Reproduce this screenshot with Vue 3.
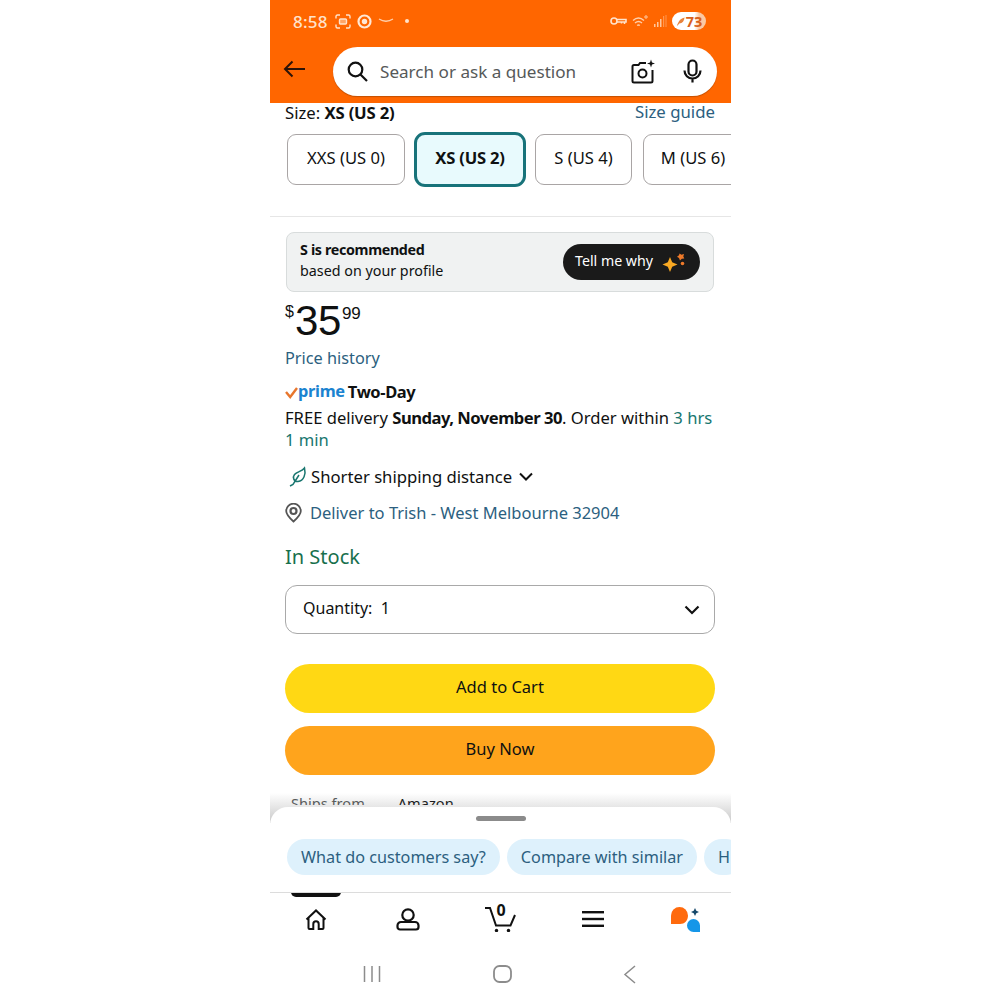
<script setup>
const sizes = [
  { label: 'XXS (US 0)', w: 118 },
  { label: 'XS (US 2)', w: 112, active: true },
  { label: 'S (US 4)', w: 97 },
  { label: 'M (US 6)', w: 100 },
]
const prompts = ['What do customers say?', 'Compare with similar', 'H']
</script>

<template>
  <div class="page">
    <div class="phone">
      <header class="top">
        <div class="status">
          <span class="time">8:58</span>
          <svg class="st" width="16" height="15" viewBox="0 0 16 15" fill="none" stroke="#ffe3cc" stroke-width="1.400">
            <path d="M1 4.500V2.500Q1 1 2.500 1H5M11 1h2.500Q15 1 15 2.500v2M1 10.500v2Q1 14 2.500 14H5M11 14h2.500q1.500 0 1.500-1.500v-2" />
            <rect x="4.500" y="5" width="7" height="5" rx="1" fill="#ffe3cc" fill-opacity=".5" />
          </svg>
          <svg class="st" width="15" height="15" viewBox="0 0 15 15" fill="none">
            <circle cx="7.500" cy="7.500" r="6" stroke="#ffe8d6" stroke-width="2.200" />
            <circle cx="7.500" cy="7.500" r="2.700" fill="#ffe8d6" />
          </svg>
          <svg class="st smile" width="16" height="7" viewBox="0 0 16 7" fill="none">
            <path d="M1 2q7 4.500 14 0" stroke="#ffd0ac" stroke-width="1.300" />
          </svg>
          <span class="dot"></span>
          <span class="spacer"></span>
          <svg width="17" height="10" viewBox="0 0 17 10" fill="none" stroke="#ffe3cc" stroke-width="1.600">
            <circle cx="4" cy="5" r="3" />
            <path d="M7 3.500h9v2.500h-1.500v2M11.500 6v1.500M7 6h7" />
          </svg>
          <svg class="wifi" width="16" height="13" viewBox="0 0 16 13" fill="none" stroke="#ffd0ac" stroke-width="1.400">
            <path d="M1 5.500q5.500-5 11 0M3 8q3.500-3 7 0M5.200 10.500q1.300-1.200 2.600 0" />
            <circle cx="14" cy="2" r="1.200" stroke-width="1" />
          </svg>
          <svg class="signal" width="13" height="12" viewBox="0 0 13 12" fill="#ffc79c">
            <rect x="0" y="9" width="1.500" height="3" />
            <rect x="3" y="7" width="1.500" height="5" />
            <rect x="6" y="4" width="1.500" height="8" />
            <rect x="9" y="1" width="1.200" height="11" opacity=".5" />
            <rect x="11.500" y="0" width="1" height="12" opacity=".5" />
          </svg>
          <span class="battery">
            <svg width="9" height="9" viewBox="0 0 11 10">
              <path d="M1 10l2-4c1-3 4-5 7.500-6C10 4 8 7 4 7.500L2 10z" fill="#e8833d" />
            </svg>
            73
          </span>
        </div>
        <div class="searchrow">
          <svg class="back" width="22" height="18" viewBox="0 0 22 18" fill="none" stroke="#2d1408" stroke-width="2">
            <path d="M22 9H2M9.500 1.500L2 9l7.500 7.500" />
          </svg>
          <div class="search">
            <svg width="21" height="21" viewBox="0 0 21 21" fill="none" stroke="#111" stroke-width="2.200">
              <circle cx="8.500" cy="8.500" r="6.800" />
              <path d="M13.500 13.500l6.500 6.500" />
            </svg>
            <span class="placeholder">Search or ask a question</span>
            <svg class="cam" width="25" height="25" viewBox="0 0 25 25" fill="none" stroke="#111" stroke-width="2">
              <path d="M15 4H9L7.500 6H3a1.500 1.500 0 0 0-1.500 1.500V22A1.500 1.500 0 0 0 3 23.500h17a1.500 1.500 0 0 0 1.500-1.500V11" />
              <circle cx="11.500" cy="14.500" r="4" />
              <path d="M20 0.500l1 3 3 1-3 1-1 3-1-3-3-1 3-1z" fill="#111" stroke="none" />
            </svg>
            <svg class="mic" width="19" height="25" viewBox="0 0 19 25" fill="none" stroke="#111" stroke-width="2">
              <rect x="5.500" y="1.500" width="8" height="15" rx="4" stroke-width="2.200" />
              <path d="M1.500 11.500a8 8 0 0 0 16 0M9.500 19.500v4" stroke-width="2.200" />
            </svg>
          </div>
        </div>
      </header>

      <main class="content">
        <div class="sizehead">
          <span>Size: <b>XS (US 2)</b></span>
          <a class="link">Size guide</a>
        </div>
        <div class="chips">
          <div
            v-for="s in sizes"
            :key="s.label"
            class="chip"
            :class="{ active: s.active }"
            :style="{ flexBasis: s.w + 'px' }"
          >{{ s.label }}</div>
        </div>
        <div class="rule"></div>

        <div class="body">
          <section class="rec">
            <div class="rectext">
              <strong>S is recommended</strong>
              <span>based on your profile</span>
            </div>
            <div class="tell">
              <span>Tell me why</span>
              <svg width="24" height="20" viewBox="0 0 24 20">
                <path d="M8 5l2.200 5.300L15.500 12.500l-5.300 2.200L8 20l-2.200-5.300L.5 12.500l5.300-2.200z" fill="#f8a823" />
                <path d="M17.500 1.500l2 1.200 2.500-.7-.7 2.500 1 2-2.500.2-1.800 1.800-1-2.500-2-1.200 2-1.500z" fill="#ee7a2a" />
                <circle cx="20.500" cy="11.500" r="1.800" fill="#ee7a2a" />
              </svg>
            </div>
          </section>

          <div class="price"><sup>$</sup><span class="whole">35</span><sup class="cents">99</sup></div>
          <a class="link history">Price history</a>

          <div class="prime">
            <svg width="13" height="12" viewBox="0 0 13 12" fill="none" stroke="#e8762d" stroke-width="2.400">
              <path d="M1 5l4.200 5L12 1" />
            </svg>
            <span class="primeword">prime</span>
            <b>Two-Day</b>
          </div>
          <p class="delivery">FREE delivery <b>Sunday, November 30</b>. Order within <span class="teal">3 hrs 1 min</span></p>

          <div class="ship">
            <svg width="20" height="22" viewBox="0 0 20 22" fill="none" stroke="#19766f" stroke-width="1.500">
              <path d="M16.500 3c1.500 6-.5 13-6.500 13.500C5.500 17 4.500 12 6.500 9.500 9 6.500 14 6.500 16.500 3z" />
              <path d="M2 21l3-1.500L11 10" />
            </svg>
            <span>Shorter shipping distance</span>
            <svg width="14" height="9" viewBox="0 0 14 9" fill="none" stroke="#111" stroke-width="2">
              <path d="M1 1.500l6 6 6-6" />
            </svg>
          </div>

          <div class="deliver">
            <svg width="17" height="20" viewBox="0 0 17 20" fill="none" stroke="#555" stroke-width="1.800">
              <path d="M8.500 18.500C4 14.500 1.200 11.500 1.200 8a7.300 7.300 0 0 1 14.600 0c0 3.500-2.800 6.500-7.300 10.500z" />
              <circle cx="8.500" cy="8" r="3" stroke-width="2.200" />
            </svg>
            <a class="link">Deliver to Trish - West Melbourne 32904</a>
          </div>

          <div class="stock">In Stock</div>

          <div class="qty">
            <span>Quantity:&nbsp; 1</span>
            <svg width="16" height="10" viewBox="0 0 16 10" fill="none" stroke="#111" stroke-width="2.200">
              <path d="M1.500 1.500L8 8l6.500-6.500" />
            </svg>
          </div>

          <button class="cta cart">Add to Cart</button>
          <button class="cta buy">Buy Now</button>

          <div class="ships"><span>Ships from</span><span class="seller">Amazon</span></div>
        </div>
        <div class="shade"></div>
      </main>

      <section class="sheet">
        <div class="grip"></div>
        <div class="prompts">
          <span v-for="p in prompts" :key="p" class="prompt">{{ p }}</span>
        </div>
      </section>

      <nav class="tabs">
        <span class="indicator"></span>
        <div class="tab">
          <svg width="22" height="21" viewBox="0 0 22 21" fill="none" stroke="#111" stroke-width="2">
            <path d="M1.500 10.500L11 1.500l9.500 9M3.500 9v10a1 1 0 0 0 1 1h3.800v-5a2.700 2.700 0 0 1 5.400 0v5h3.800a1 1 0 0 0 1-1V9" />
          </svg>
        </div>
        <div class="tab">
          <svg width="24" height="23" viewBox="0 0 24 23" fill="none" stroke="#111" stroke-width="2.200">
            <circle cx="12" cy="7" r="5.700" />
            <path d="M5 14h14a3.500 3.500 0 0 1 3.500 3.500V19a2.500 2.500 0 0 1-2.500 2.500H4A2.500 2.500 0 0 1 1.500 19v-1.500A3.500 3.500 0 0 1 5 14z" />
          </svg>
        </div>
        <div class="tab cartnav">
          <svg width="32" height="26" viewBox="0 0 32 26" fill="none" stroke="#111" stroke-width="2">
            <path d="M1 2h5l6 17.500h14.500L31 9" />
            <circle cx="12.500" cy="24.500" r="1.700" fill="#111" stroke="none" />
            <circle cx="24.500" cy="24.500" r="1.700" fill="#111" stroke="none" />
          </svg>
          <span class="count">0</span>
        </div>
        <div class="tab">
          <svg width="22" height="16" viewBox="0 0 22 16" fill="#111">
            <rect width="22" height="2.400" />
            <rect y="6.800" width="22" height="2.400" />
            <rect y="13.600" width="22" height="2.400" />
          </svg>
        </div>
        <div class="tab">
          <svg width="30" height="26" viewBox="0 0 30 26">
            <path d="M1 18V9.500a8.500 8.500 0 1 1 17 0c0 5-3.500 8.500-8 8.500z" fill="#ff6a0d" />
            <path d="M23.500 26a6.500 6.500 0 1 1 6.500-6.500V26z" fill="#1596e8" />
            <path d="M25 2l1.300 2.700L29 6l-2.700 1.300L25 10l-1.300-2.700L21 6l2.700-1.300z" fill="#17496b" />
          </svg>
        </div>
      </nav>

      <div class="sysnav">
        <svg width="18" height="16" viewBox="0 0 18 16" stroke="#8c8c8c" stroke-width="1.500">
          <path d="M1.500 0v16M9 0v16M16.500 0v16" />
        </svg>
        <svg width="19" height="18" viewBox="0 0 19 18" fill="none" stroke="#8c8c8c" stroke-width="1.800">
          <rect x="1" y="1" width="17" height="16" rx="5.500" />
        </svg>
        <svg width="13" height="19" viewBox="0 0 13 19" fill="none" stroke="#8c8c8c" stroke-width="1.500">
          <path d="M12 1L2 9.500 12 18" />
        </svg>
      </div>
    </div>
  </div>
</template>

<style>
html, body { background: #fff; }
</style>

<style scoped>
.page {
  padding-left: 270px;
  width: 730px;
  height: 1000px;
  overflow: hidden;
  font-family: "Noto Sans", "Open Sans", sans-serif;
  color: #0f1111;
}
.phone { width: 461px; height: 1000px; background: #fff; display: flex; flex-direction: column; }

.top { height: 103px; flex: none; background: #ff6600; box-sizing: border-box; }
.status {
  height: 42px; margin-bottom: 5px; box-sizing: border-box; padding: 0 25px 0 23px;
  display: flex; align-items: center; color: #ffe3cc;
}
.time { font-size: 17px; font-weight: 500; margin-right: 7px; letter-spacing: .2px; }
.st { margin-right: 6px; }
.smile { margin-top: -2px; }
.dot { width: 4px; height: 4px; border-radius: 50%; background: #ffe3cc; margin-left: 5px; }
.spacer { flex: 1; }
.wifi { margin-left: 5px; }
.signal { margin-left: 6px; }
.battery {
  margin-left: 5px; width: 34px; height: 18px; border-radius: 9px;
  background: linear-gradient(90deg, #fff 0, #fff 66%, #fbc9a3 80%, #fbc9a3 100%);
  color: #d9601a; font-size: 14.500px; font-weight: 700; line-height: 18px;
  display: flex; justify-content: center; align-items: center; overflow: hidden; gap: 1px;
}
.searchrow { display: flex; align-items: center; padding: 0 14px 0 14px; }
.back { margin-right: 29px; margin-left: -1px; margin-top: -6px; }
.search {
  width: 384px; height: 49px; box-sizing: border-box; border-radius: 25px; background: #fff;
  display: flex; align-items: center; padding: 0 15px 0 14px; margin-left: -1px;
  box-shadow: 0 1px 1px rgba(90, 40, 0, .35);
}
.placeholder { font-size: 17.100px; color: #565959; margin-left: 12px; flex: 1; white-space: nowrap; padding-bottom: 1px; }
.cam { margin-right: 27px; margin-left: -1px; }

.content { height: 720px; flex: none; position: relative; }
.sizehead {
  display: flex; justify-content: space-between; padding: 0 16px 0 15px;
  font-size: 16.700px; line-height: 20px; height: 20px;
}
.sizehead b { font-weight: 700; letter-spacing: -.2px; }
.link { color: #2c5f80; }
.sizehead .link { font-size: 16.800px; margin-top: -1px; }
.chips { display: flex; padding: 9px 0 0 17px; align-items: center; overflow: hidden; height: 55px; box-sizing: content-box; }
.chip {
  flex: none; height: 51px; box-sizing: border-box; border: 1px solid #a9a5a5; border-radius: 9px;
  display: flex; align-items: center; justify-content: center; font-size: 16.600px; white-space: nowrap;
  padding-bottom: 5px; margin-right: 11px;
}
.chip:nth-child(1), .chip:nth-child(2) { margin-right: 9px; }
.chip.active { height: 55px; border: 3px solid #18737a; background: #e8fafd; font-weight: 700; border-radius: 11px; letter-spacing: -.2px; padding-bottom: 4px; }
.rule { height: 1px; background: #e6e6e6; margin-top: 29px; }

.body { padding: 15px 16px 0 15px; }
.rec {
  height: 60px; box-sizing: border-box; margin: 0 1px; border: 1px solid #d8dcdc; border-radius: 8px;
  background: #f0f2f2; display: flex; align-items: center; justify-content: space-between; padding: 0 13px 0 13px;
}
.rectext { display: flex; flex-direction: column; font-size: 14.300px; line-height: 21px; padding-bottom: 5px; }
.rectext strong { font-weight: 700; letter-spacing: -.35px; }
.tell {
  width: 137px; height: 36px; box-sizing: border-box; background: #1a1a1a; color: #fff; border-radius: 18px;
  display: flex; align-items: center; font-size: 14.200px; padding: 0 0 0 12px; gap: 9px; white-space: nowrap;
  margin-top: -1px;
}
.tell span { padding-bottom: 3px; }
.price { display: flex; align-items: flex-start; height: 51px; margin-top: 4px; font-family: "Liberation Sans", sans-serif; line-height: 1; }
.price sup { margin-top: 8px; vertical-align: baseline; font-size: 16px; }
.whole { font-size: 42px; margin: 4px 0 0 1px; letter-spacing: -.3px; }
.price .cents { font-size: 17px; margin: 9px 0 0 1px; letter-spacing: -.3px; }
.history { display: block; font-size: 16.300px; line-height: 22px; margin-top: 0; }
.prime { display: flex; align-items: center; margin-top: 11px; height: 22px; font-size: 16.500px; }
.prime b { letter-spacing: -.4px; }
.prime svg { margin-top: 3px; }
.primeword { color: #1b83d0; font-weight: 700; margin-right: 3px; letter-spacing: -.3px; font-size: 16.400px; line-height: 20px; }
.delivery { margin: 5px 0 0; font-size: 16.600px; line-height: 22px; }
.delivery b { letter-spacing: -.5px; }
.teal { color: #17766f; }
.ship { display: flex; align-items: center; margin: 13px 0 0 3px; height: 24px; font-size: 16.700px; }
.ship span { margin: 0 7px 0 3px; }
.deliver { display: flex; align-items: center; margin-top: 12px; height: 24px; font-size: 16.500px; }
.deliver .link { margin-left: 8px; }
.deliver svg { margin-top: 2px; }
.stock { color: #18704d; font-size: 20px; line-height: 28px; margin-top: 19px; }
.qty {
  height: 49px; box-sizing: border-box; border: 1px solid #a9a9a9; border-radius: 12px; margin-top: 14px;
  display: flex; align-items: center; justify-content: space-between; padding: 0 14px 4px 17px; font-size: 16px;
}
.qty svg { margin-top: 4px; }
.cta {
  display: block; width: 100%; height: 49px; border: 0; border-radius: 25px; font: inherit; font-size: 16.500px;
  color: #0f1111; text-align: center; padding: 0 0 5px;
}
.cart { background: #ffd814; margin-top: 30px; }
.buy { background: #ffa41c; margin-top: 13px; }
.ships {
  display: flex; margin: 18px 0 0 6px; font-size: 14.600px; line-height: 20px; height: 12px;
  overflow: hidden; color: #565959; align-items: flex-start;
}
.seller { color: #0f1111; margin-left: 33px; }
.shade {
  position: absolute; left: 0; right: 0; bottom: 0; height: 30px;
  background: linear-gradient(rgba(120, 120, 120, 0), rgba(120, 120, 120, .4));
}

.sheet {
  flex: none; height: 86px; box-sizing: border-box; margin-top: -16px; position: relative; z-index: 1;
  background: #fff; border-radius: 18px 18px 0 0; border-bottom: 1px solid #dcdcdc;
  padding-top: 9px; overflow: hidden;
}
.grip { width: 50px; height: 5px; border-radius: 3px; background: #8b8b8b; margin: 0 auto; }
.prompts { display: flex; gap: 7px; padding: 18px 0 0 17px; }
.prompt {
  flex: none; height: 36px; border-radius: 18px; background: #def1fc; color: #2c5f80;
  font-size: 16.220px; line-height: 36px; padding: 0 14px;
}
.tabs { flex: none; height: 53px; position: relative; display: grid; grid-template-columns: repeat(5, 92.200px); }
.indicator { position: absolute; left: 21px; top: -1px; width: 50px; height: 5px; background: #111; border-radius: 0 0 5px 5px; }
.tab { display: flex; align-items: center; justify-content: center; padding-bottom: 1px; position: relative; }
.count { position: absolute; left: 42px; top: 8px; font-size: 16px; font-weight: 700; line-height: 18px; }
.sysnav { flex: none; padding: 18px 95px 0 93px; display: flex; justify-content: space-between; align-items: center; height: 20px; }
</style>
